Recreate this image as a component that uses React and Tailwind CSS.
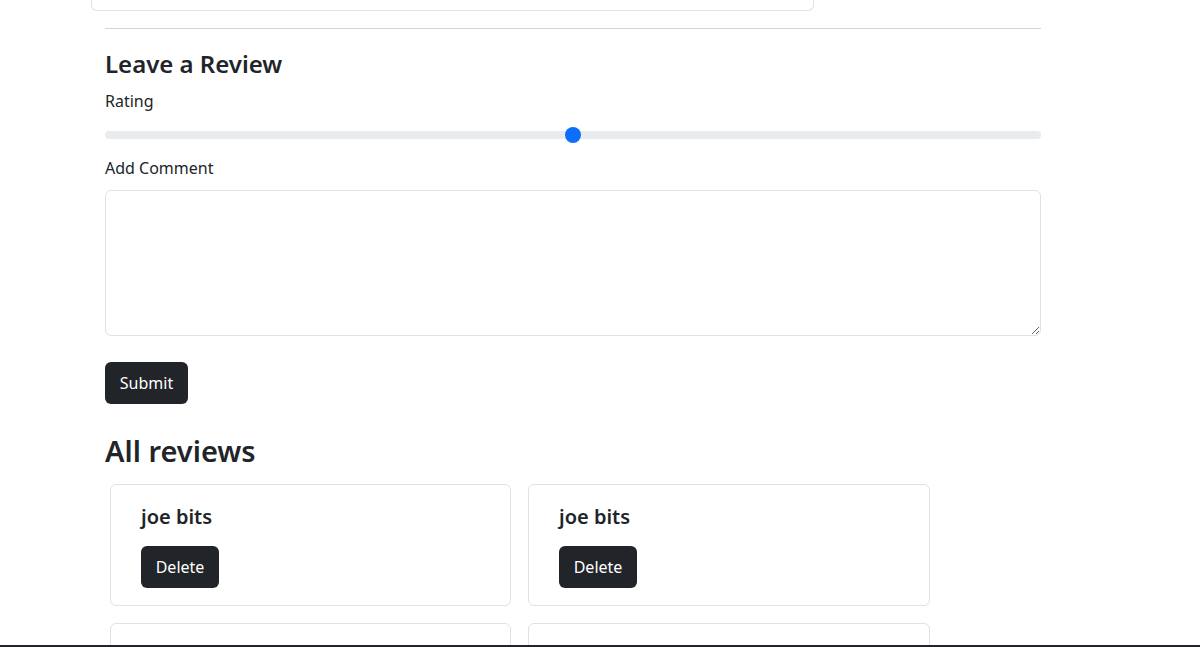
import React from "react";

function ReviewCard({ name }) {
  return (
    <div className="h-[122px] rounded-md border border-[#dee2e6] bg-white pl-[30px] pt-[18px]">
      {name ? (
        <>
          <div className="text-[20px] font-semibold leading-[28px] text-[#212529]">{name}</div>
          <button className="mt-[15px] h-[42px] w-[78px] rounded-md bg-[#212529] text-[16px] text-white">
            Delete
          </button>
        </>
      ) : null}
    </div>
  );
}

export default function App() {
  return (
    <div
      className="relative h-[647px] w-[1200px] overflow-hidden bg-white text-[#212529]"
      style={{ fontFamily: '"Noto Sans", "Open Sans", sans-serif' }}
    >
      <div className="ml-[91px] h-[11px] w-[723px] rounded-b-md border border-t-0 border-[#dee2e6]" />
      <div className="mx-[105px] w-[936px]">
        <div className="mt-[17px] h-px bg-[#d3d3d3]" />
        <h4 className="mt-[20px] text-[24px] font-semibold leading-[29px]">Leave a Review</h4>
        <label className="mt-[11px] block text-[16px] leading-[24px]">Rating</label>
        <div className="relative mt-[10px] flex h-[24px] items-center">
          <div className="h-[8px] w-full rounded-full bg-[#e9ecef]" />
          <div className="absolute left-[460px] top-[4px] h-[16px] w-[16px] rounded-full bg-[#0d6efd]" />
        </div>
        <label className="mt-[9px] block text-[16px] leading-[24px]">Add Comment</label>
        <textarea className="mt-[10px] block h-[146px] w-full resize-y rounded-md border border-[#dee2e6] bg-white px-3 py-1.5 outline-none" />
        <button className="mt-[26px] h-[42px] w-[83px] rounded-md bg-[#212529] text-[16px] text-white">
          Submit
        </button>
        <h2 className="mt-[28px] text-[29px] font-semibold leading-[38px]">All reviews</h2>
      </div>
      <div className="ml-[110px] mt-[14px] grid w-[820px] grid-cols-[401px_402px] gap-x-[17px] gap-y-[17px]">
        <ReviewCard name="joe bits" />
        <ReviewCard name="joe bits" />
        <ReviewCard />
        <ReviewCard />
      </div>
      <div className="absolute bottom-0 left-0 h-[2px] w-full bg-[#212529]" />
    </div>
  );
}
